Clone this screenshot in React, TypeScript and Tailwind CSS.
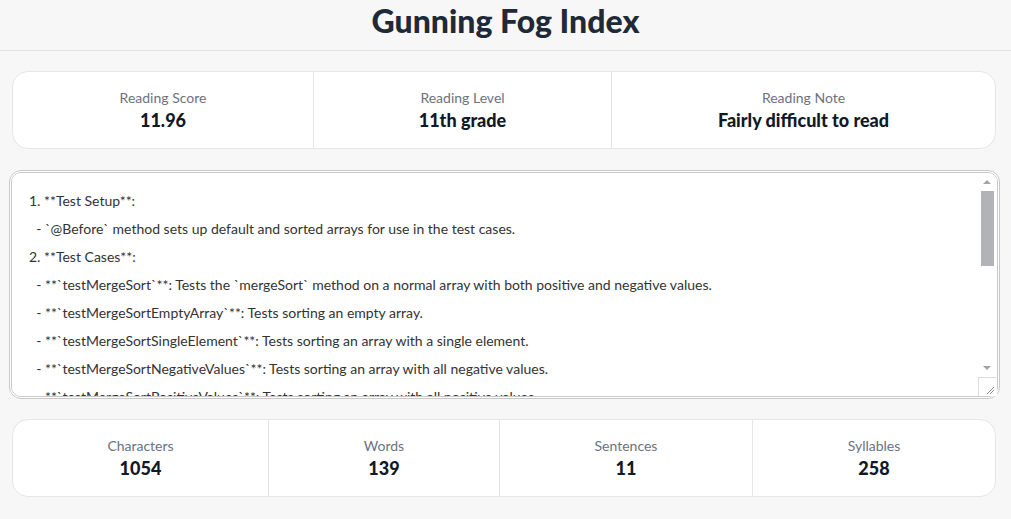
import React from "react";

const font = { fontFamily: "Lato, 'Noto Sans', sans-serif" };

const readingStats = [
  { label: "Reading Score", value: "11.96", w: "w-[300px]" },
  { label: "Reading Level", value: "11th grade", w: "w-[298px]" },
  { label: "Reading Note", value: "Fairly difficult to read", w: "flex-1" },
];

const textStats = [
  { label: "Characters", value: "1054", w: "w-[255px]" },
  { label: "Words", value: "139", w: "w-[231px]" },
  { label: "Sentences", value: "11", w: "w-[253px]" },
  { label: "Syllables", value: "258", w: "flex-1" },
];

const sample = `1. **Test Setup**:
  - \`@Before\` method sets up default and sorted arrays for use in the test cases.
2. **Test Cases**:
  - **\`testMergeSort\`**: Tests the \`mergeSort\` method on a normal array with both positive and negative values.
  - **\`testMergeSortEmptyArray\`**: Tests sorting an empty array.
  - **\`testMergeSortSingleElement\`**: Tests sorting an array with a single element.
  - **\`testMergeSortNegativeValues\`**: Tests sorting an array with all negative values.
  - **\`testMergeSortPositiveValues\`**: Tests sorting an array with all positive values.
  - **\`testMergeSortDuplicates\`**: Tests sorting an array that contains duplicate values.
3. **Assertions**:
  - Each test uses \`assertArrayEquals\` to compare the sorted output with the expected array.`;

function StatCard({ items }: { items: { label: string; value: string; w: string }[] }) {
  return (
    <div className="ml-3 mr-[15px] flex h-[78px] rounded-2xl border border-[#e6e6e6] bg-white">
      {items.map((it, i) => (
        <div
          key={it.label}
          className={`${it.w} flex flex-col items-center justify-center pb-[2px] ${i > 0 ? "border-l border-[#e6e6e6]" : ""}`}
        >
          <div className="text-[14px] leading-5 text-[#6b7280]">{it.label}</div>
          <div className="mt-[2px] text-[18px] font-black leading-5 text-[#111827]">{it.value}</div>
        </div>
      ))}
    </div>
  );
}

// the native bar is blank in headless mode, so draw it over the track
function FakeScrollbar() {
  return (
    <div className="pointer-events-none absolute bottom-[3px] right-[4px] top-[3px] flex w-[18px] flex-col items-center">
      <div className="flex h-[18px] items-center">
        <span className="h-0 w-0 border-x-[4px] border-b-[4px] border-x-transparent border-b-[#a3a3a3]" />
      </div>
      <div className="h-[75px] w-[13px] bg-[#b1b3b6]" />
      <div className="flex-1" />
      <div className="flex h-[18px] items-center">
        <span className="h-0 w-0 border-x-[4px] border-t-[4px] border-x-transparent border-t-[#a3a3a3]" />
      </div>
      <div className="flex h-[19px] w-[18px] items-end justify-end border-l border-t border-[#dcdcdc] bg-white">
        <svg width="10" height="10" viewBox="0 0 10 10" className="mb-[1px] mr-[1px]">
          <path d="M9 2 L2 9 M9 5 L5 9" stroke="#8a8a8a" strokeWidth="1" />
        </svg>
      </div>
    </div>
  );
}

export default function App() {
  return (
    <div className="min-h-[519px] bg-[#f7f7f7]" style={font}>
      <header className="flex h-[51px] justify-center border-b border-[#e3e3e3] pt-[3px]">
        <h1 className="text-[32px] font-black leading-9 text-[#1f2937]">Gunning Fog Index</h1>
      </header>
      <main className="flex flex-col gap-5 pt-5">
        <StatCard items={readingStats} />
        <div className="relative ml-[9px] mr-[11px] mt-[1px]">
          <textarea
            defaultValue={sample}
            spellCheck
            className="block h-[229px] w-full resize-y rounded-xl border-[3px] border-double border-[#c8c8c8] bg-white px-[17px] pt-[14px] text-[14px] leading-[28px] text-[#333] outline-none [&::-webkit-scrollbar]:w-[17px] [&::-webkit-scrollbar-track]:bg-white [&::-webkit-scrollbar-corner]:bg-white [&::-webkit-resizer]:bg-white"
            style={font}
          />
          <FakeScrollbar />
        </div>
        <StatCard items={textStats} />
      </main>
    </div>
  );
}
